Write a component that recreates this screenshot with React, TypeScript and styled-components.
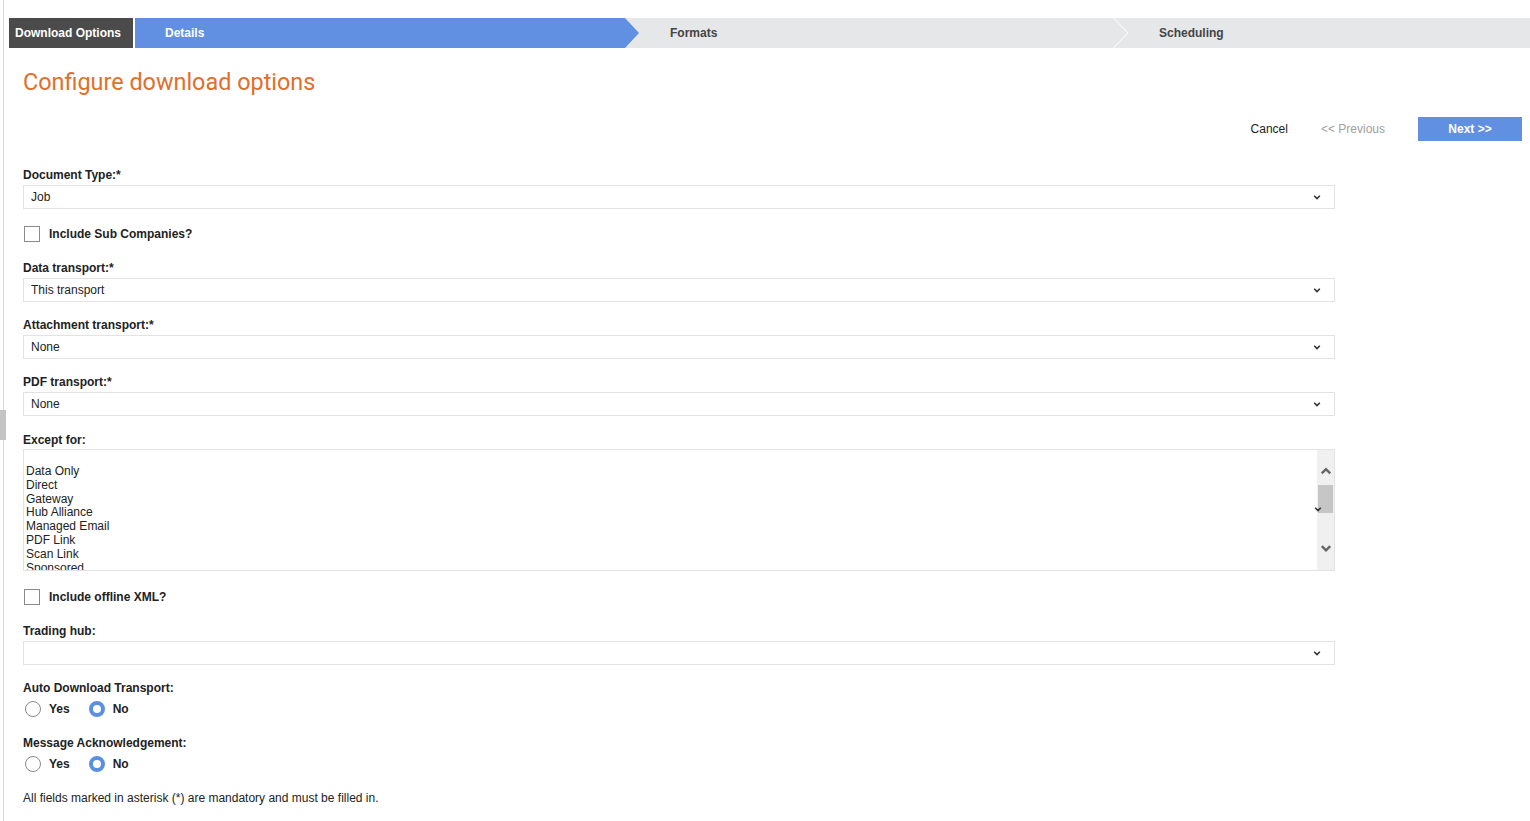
import styled, { createGlobalStyle } from 'styled-components';

const GlobalStyle = createGlobalStyle`
  html, body {
    margin: 0;
    padding: 0;
    background: #fff;
    font-family: "Liberation Sans", Arial, sans-serif;
    font-size: 12px;
    color: #222;
  }
`;

const Chevron = ({ size = 8, color = '#333', up = false }: { size?: number; color?: string; up?: boolean }) => (
  <svg width={size} height={size} viewBox="0 0 10 10">
    <polyline
      points={up ? '1.5,7 5,3.5 8.5,7' : '1.5,3.5 5,7 8.5,3.5'}
      fill="none"
      stroke={color}
      strokeWidth="2"
    />
  </svg>
);

const SelectBox = ({ value }: { value: string }) => (
  <Select>
    <span>{value}</span>
    <Chevron />
  </Select>
);

const Radios = ({ selected }: { selected: 'Yes' | 'No' }) => (
  <RadioRow>
    {(['Yes', 'No'] as const).map((o) => (
      <RadioOption key={o}>
        <Radio $on={selected === o} />
        <span>{o}</span>
      </RadioOption>
    ))}
  </RadioRow>
);

const exceptItems = ['', 'Data Only', 'Direct', 'Gateway', 'Hub Alliance', 'Managed Email', 'PDF Link', 'Scan Link', 'Sponsored'];

const App = () => {
  return (
    <>
      <GlobalStyle />
      <Page>
        <Handle />
        <Frame>
          <Steps>
            <ActiveStep>Download Options</ActiveStep>
            <CurrentStep>Details</CurrentStep>
            <NextStep>Formats</NextStep>
            <svg width="16" height="30" viewBox="0 0 16 30">
              <polyline points="0.5,0 15,15 0.5,30" fill="none" stroke="#fff" strokeWidth="1" />
            </svg>
            <LastStep>Scheduling</LastStep>
          </Steps>
          <Content>
            <Title>Configure download options</Title>
            <Actions>
              <TextButton>Cancel</TextButton>
              <TextButton $disabled>&lt;&lt; Previous</TextButton>
              <PrimaryButton>Next &gt;&gt;</PrimaryButton>
            </Actions>

            <Form>
              <Field>
                <Label>Document Type:*</Label>
                <SelectBox value="Job" />
              </Field>
              <CheckRow $top={17} $bottom={18}>
                <Check />
                <span>Include Sub Companies?</span>
              </CheckRow>
              <Field>
                <Label>Data transport:*</Label>
                <SelectBox value="This transport" />
              </Field>
              <Field $gap={15}>
                <Label>Attachment transport:*</Label>
                <SelectBox value="None" />
              </Field>
              <Field $gap={15}>
                <Label>PDF transport:*</Label>
                <SelectBox value="None" />
              </Field>
              <Field $gap={16}>
                <Label $mb={2}>Except for:</Label>
                <ListBox>
                  <ListItems>
                    {exceptItems.map((item, i) => (
                      <ListItem key={i}>{item}</ListItem>
                    ))}
                  </ListItems>
                  <ListArrow>
                    <Chevron size={8} />
                  </ListArrow>
                  <ScrollTrack>
                    <Chevron size={12} color="#666" up />
                    <Thumb />
                    <Chevron size={12} color="#666" />
                  </ScrollTrack>
                </ListBox>
              </Field>
              <CheckRow $top={18} $bottom={18}>
                <Check />
                <span>Include offline XML?</span>
              </CheckRow>
              <Field>
                <Label>Trading hub:</Label>
                <SelectBox value="" />
              </Field>
              <Field $gap={15}>
                <Label $mb={6}>Auto Download Transport:</Label>
                <Radios selected="No" />
              </Field>
              <Field $gap={18}>
                <Label $mb={6}>Message Acknowledgement:</Label>
                <Radios selected="No" />
              </Field>
              <Note>All fields marked in asterisk (*) are mandatory and must be filled in.</Note>
            </Form>
          </Content>
        </Frame>
      </Page>
    </>
  );
};

export default App;

const Page = styled.div`
  position: relative;
  min-height: 821px;
  padding-left: 3px;
  box-sizing: border-box;
`;

const Handle = styled.div`
  position: absolute;
  left: 0;
  top: 410px;
  width: 6px;
  height: 30px;
  background: #c4c4c4;
`;

const Frame = styled.div`
  min-height: 821px;
  border-left: 1px solid #d6d6d6;
  padding: 18px 0 0 5px;
  box-sizing: border-box;
`;

const Steps = styled.div`
  display: flex;
  align-items: center;
  height: 30px;
  background: #e6e7e9;
  font-weight: bold;
  font-size: 12px;
`;

const Step = styled.div`
  height: 30px;
  display: flex;
  align-items: center;
  box-sizing: border-box;
  flex-shrink: 0;
`;

const ActiveStep = styled(Step)`
  width: 126px;
  padding-left: 6px;
  background: #4b4b4b;
  color: #fff;
  border-right: 2px solid #fff;
`;

const CurrentStep = styled(Step)`
  width: 504px;
  padding-left: 30px;
  background: #6190e3;
  color: #fff;
  clip-path: polygon(0 0, 490px 0, 504px 50%, 490px 100%, 0 100%);
`;

const NextStep = styled(Step)`
  width: 474px;
  padding-left: 31px;
  color: #444;
`;

const LastStep = styled(Step)`
  padding-left: 30px;
  color: #444;
`;

const Content = styled.div`
  padding: 20px 8px 0 14px;
`;

const Title = styled.h1`
  margin: 0;
  font-family: Roboto, "Liberation Sans", sans-serif;
  font-weight: normal;
  font-size: 23.4px;
  line-height: 28px;
  color: #e06f2c;
`;

const Actions = styled.div`
  display: flex;
  justify-content: flex-end;
  align-items: center;
  gap: 33px;
  margin-top: 21px;
  height: 24px;
`;

const TextButton = styled.span<{ $disabled?: boolean }>`
  font-size: 12px;
  color: ${(p) => (p.$disabled ? '#a0a0a0' : '#222')};
  cursor: ${(p) => (p.$disabled ? 'default' : 'pointer')};
`;

const PrimaryButton = styled.button`
  width: 104px;
  height: 24px;
  border: none;
  background: #6190e3;
  color: #fff;
  font-family: "Liberation Sans", Arial, sans-serif;
  font-weight: bold;
  font-size: 12px;
  cursor: pointer;
`;

const Form = styled.div`
  width: 1312px;
  margin-top: 26px;
`;

const Field = styled.div<{ $gap?: number }>`
  margin-top: ${(p) => p.$gap ?? 0}px;
`;

const Label = styled.div<{ $mb?: number }>`
  font-weight: bold;
  line-height: 14px;
  padding-top: 1px;
  margin-bottom: ${(p) => p.$mb ?? 3}px;
  color: #222;
`;

const Select = styled.div`
  height: 24px;
  box-sizing: border-box;
  border: 1px solid #e3e3e3;
  display: flex;
  align-items: center;
  justify-content: space-between;
  padding: 0 13px 0 7px;
  color: #222;
`;

const CheckRow = styled.label<{ $top: number; $bottom: number }>`
  display: flex;
  align-items: center;
  gap: 9px;
  margin: ${(p) => p.$top}px 0 ${(p) => p.$bottom}px 1px;
  font-weight: bold;
  height: 16px;
`;

const Check = styled.span`
  width: 16px;
  height: 16px;
  box-sizing: border-box;
  border: 1px solid #8a8a8a;
  background: #fff;
`;

const ListBox = styled.div`
  position: relative;
  height: 122px;
  box-sizing: border-box;
  border: 1px solid #e3e3e3;
  display: flex;
  overflow: hidden;
`;

const ListItems = styled.div`
  flex: 1;
  padding: 1px 0 0 2px;
`;

const ListItem = styled.div`
  height: 13.86px;
  line-height: 13.86px;
  white-space: pre;
`;

const ListArrow = styled.div`
  position: absolute;
  right: 12px;
  top: 52px;
`;

const ScrollTrack = styled.div`
  width: 17px;
  background: #f0f0f0;
  display: flex;
  flex-direction: column;
  align-items: center;
  padding-top: 15px;
  box-sizing: border-box;

  & > svg:last-child {
    margin-top: 29px;
  }
`;

const Thumb = styled.div`
  width: 15px;
  height: 28px;
  margin-top: 8px;
  background: #c6c6c6;
`;

const RadioRow = styled.div`
  display: flex;
  align-items: center;
  gap: 19px;
  padding-left: 2px;
  height: 16px;
`;

const RadioOption = styled.label`
  display: flex;
  align-items: center;
  gap: 8px;
  font-weight: bold;
`;

const Radio = styled.span<{ $on: boolean }>`
  width: 16px;
  height: 16px;
  box-sizing: border-box;
  border-radius: 50%;
  border: ${(p) => (p.$on ? '4px solid #5b8fe0' : '1px solid #8a8a8a')};
  background: #fff;
`;

const Note = styled.div`
  margin-top: 19px;
  font-size: 12px;
  line-height: 14px;
  color: #222;
`;
